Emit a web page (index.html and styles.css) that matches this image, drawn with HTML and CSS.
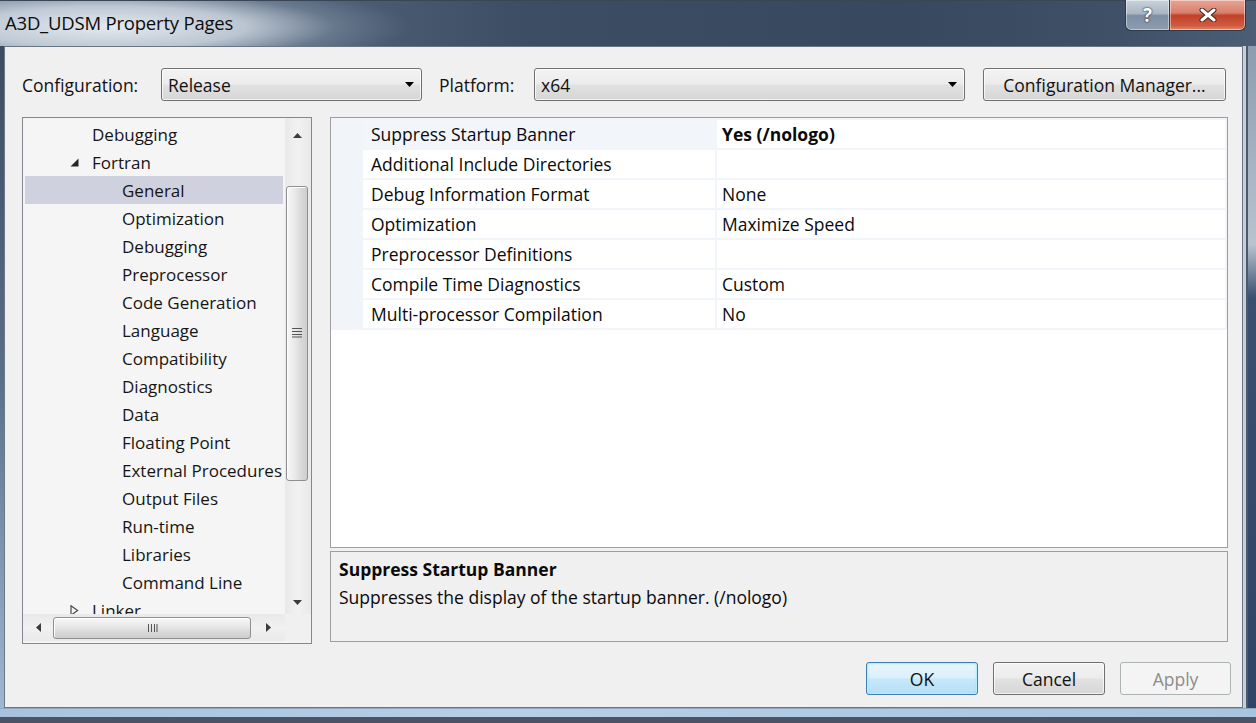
FILE: index.html
```html
<!DOCTYPE html>
<html>
<head>
<meta charset="utf-8">
<title>A3D_UDSM Property Pages</title>
<link rel="stylesheet" href="styles.css">
</head>
<body>
<div class="window">
  <div class="titlebar">
    <div class="title">A3D_UDSM Property Pages</div>
    <div class="caption-btns">
      <div class="cap help">?</div>
      <div class="cap close">
        <svg width="20" height="14" viewBox="0 0 20 14"><path d="M4 2 L16 12 M16 2 L4 12" stroke="#3a2a28" stroke-width="5" stroke-linecap="round"/><path d="M4 2 L16 12 M16 2 L4 12" stroke="#fff" stroke-width="3" stroke-linecap="round"/></svg>
      </div>
    </div>
  </div>
  <div class="middle">
    <div class="frame-l"></div>
    <div class="client">
      <div class="config-row">
        <div class="lbl lbl-conf">Configuration:</div>
        <div class="combo combo-conf">Release<svg class="arrow" width="9" height="5" viewBox="0 0 9 5"><path d="M0 0 H9 L4.5 5 Z" fill="#000"/></svg></div>
        <div class="lbl lbl-plat">Platform:</div>
        <div class="combo combo-plat">x64<svg class="arrow" width="9" height="5" viewBox="0 0 9 5"><path d="M0 0 H9 L4.5 5 Z" fill="#000"/></svg></div>
        <div class="btn btn-mgr">Configuration Manager...</div>
      </div>
      <div class="main">
        <div class="tree">
          <div class="tree-items">
            <div class="node l1 noexp">Debugging</div>
            <div class="node l1"><svg class="exp" width="9" height="9" viewBox="0 0 9 9"><path d="M8.5 0.5 V8.5 H0.5 Z" fill="#262626"/></svg>Fortran</div>
            <div class="node l2 sel">General</div>
            <div class="node l2">Optimization</div>
            <div class="node l2">Debugging</div>
            <div class="node l2">Preprocessor</div>
            <div class="node l2">Code Generation</div>
            <div class="node l2">Language</div>
            <div class="node l2">Compatibility</div>
            <div class="node l2">Diagnostics</div>
            <div class="node l2">Data</div>
            <div class="node l2">Floating Point</div>
            <div class="node l2">External Procedures</div>
            <div class="node l2">Output Files</div>
            <div class="node l2">Run-time</div>
            <div class="node l2">Libraries</div>
            <div class="node l2">Command Line</div>
            <div class="node l1"><svg class="exp" width="9" height="11" viewBox="0 0 9 11"><path d="M1 0.8 L7.6 5.5 L1 10.2 Z" fill="none" stroke="#4a4a4a" stroke-width="1.2"/></svg>Linker</div>
          </div>
          <div class="vscroll">
            <div class="varrow up"><svg width="9" height="5" viewBox="0 0 9 5"><path d="M0 5 H9 L4.5 0 Z" fill="#3c3c3c"/></svg></div>
            <div class="vthumb">
              <svg width="12" height="11" viewBox="0 0 12 11"><path d="M1 1.5 H11 M1 4.5 H11 M1 7.5 H11 M1 10 H11" stroke="#555" stroke-width="1"/></svg>
            </div>
            <div class="vspace"></div>
            <div class="varrow down"><svg width="9" height="5" viewBox="0 0 9 5"><path d="M0 0 H9 L4.5 5 Z" fill="#3c3c3c"/></svg></div>
          </div>
          <div class="hscroll">
            <div class="harrow"><svg width="5" height="9" viewBox="0 0 5 9"><path d="M5 0 V9 L0 4.5 Z" fill="#3c3c3c"/></svg></div>
            <div class="hthumb">
              <svg width="11" height="10" viewBox="0 0 11 10"><path d="M1.5 1 V9 M4.5 1 V9 M7.5 1 V9 M10 1 V9" stroke="#555" stroke-width="1"/></svg>
            </div>
            <div class="harrow"><svg width="5" height="9" viewBox="0 0 5 9"><path d="M0 0 V9 L5 4.5 Z" fill="#3c3c3c"/></svg></div>
          </div>
          <div class="corner"></div>
        </div>
        <div class="right">
          <div class="grid">
            <div class="rows">
              <div class="gut"></div><div class="name sel">Suppress Startup Banner</div><div class="val bold">Yes (/nologo)</div>
              <div class="gut"></div><div class="name">Additional Include Directories</div><div class="val"></div>
              <div class="gut"></div><div class="name">Debug Information Format</div><div class="val">None</div>
              <div class="gut"></div><div class="name">Optimization</div><div class="val">Maximize Speed</div>
              <div class="gut"></div><div class="name">Preprocessor Definitions</div><div class="val"></div>
              <div class="gut"></div><div class="name">Compile Time Diagnostics</div><div class="val">Custom</div>
              <div class="gut"></div><div class="name">Multi-processor Compilation</div><div class="val">No</div>
            </div>
          </div>
          <div class="desc">
            <div class="desc-title">Suppress Startup Banner</div>
            <div class="desc-text">Suppresses the display of the startup banner. (/nologo)</div>
          </div>
        </div>
      </div>
      <div class="buttons">
        <div class="btn btn-ok">OK</div>
        <div class="btn btn-cancel">Cancel</div>
        <div class="btn btn-apply">Apply</div>
      </div>
    </div>
    <div class="frame-r"></div>
  </div>
  <div class="frame-b"></div>
  <div class="strip"></div>
</div>
</body>
</html>
```

FILE: styles.css
```css
* { box-sizing: border-box; }
html, body { margin: 0; padding: 0; }
body {
  width: 1256px;
  height: 723px;
  overflow: hidden;
  background: #4c5566;
  font-family: "Open Sans", "Noto Sans", sans-serif;
  font-size: 17.5px;
  color: #111;
}
.window {
  width: 1256px;
  height: 723px;
  display: flex;
  flex-direction: column;
}

/* ---------- title bar ---------- */
.titlebar {
  height: 46px;
  flex: none;
  display: flex;
  align-items: flex-start;
  border-top: 1px solid #3a4556;
  background:
    radial-gradient(ellipse 300px 46px at 110px 26px, rgba(232,237,242,0.97) 0%, rgba(205,214,224,0.85) 45%, rgba(150,165,182,0.35) 75%, rgba(120,135,155,0) 100%),
    linear-gradient(to right, #76869a 0, #52637a 280px, #3c4d64 520px, #38485e 900px, #3f5067 1120px, #4c5e75 1256px);
}
.title {
  margin-top: 8px;
  padding-left: 5px;
  line-height: 28px;
  font-size: 18.5px;
  color: #0c0c0c;
  letter-spacing: -0.2px;
}
.caption-btns {
  margin-left: auto;
  margin-right: 10px;
  display: flex;
  margin-top: -1px;
}
.cap {
  height: 31px;
  display: flex;
  align-items: center;
  justify-content: center;
  border: 1px solid #2e3a4a;
  border-top: none;
  box-shadow: inset 0 0 0 1px rgba(255,255,255,0.45);
}
.help {
  width: 44px;
  border-radius: 0 0 0 6px;
  border-right: none;
  background: linear-gradient(#c9d2dc 0%, #aab6c4 45%, #7e8ea3 52%, #8c9db2 100%);
  color: #fff;
  font-weight: 700;
  font-size: 19px;
  text-shadow: 0 0 2px #223, 0 0 1px #223;
}
.close {
  width: 77px;
  border-radius: 0 0 6px 0;
  background: linear-gradient(#e6a597 0%, #d9806c 42%, #c2402a 52%, #cf5b3f 85%, #df8a6b 100%);
}

/* ---------- frames ---------- */
.middle {
  height: 662px;
  flex: none;
  display: flex;
}
.frame-l {
  width: 4px;
  flex: none;
  background: linear-gradient(#3c4c62 0%, #5a6f88 50%, #9fb8d2 100%);
}
.frame-r {
  width: 13px;
  flex: none;
  background:
    linear-gradient(to right, #c7d0da 0 3px, #4c5a6c 3px 5px, transparent 5px),
    linear-gradient(#8d9cb0 0%, #b8c3cf 30%, #3a5070 38%, #2e4566 100%);
}
.frame-b {
  height: 9px;
  flex: none;
  background: linear-gradient(to right, #a8c3de, #b7cfe6 40%, #a9c4df 100%);
  border-top: 1px solid #8ea7c0;
}
.strip {
  flex: 1;
  background: #4a5466;
}

/* ---------- client ---------- */
.client {
  width: 1239px;
  flex: none;
  background: #f0f0f0;
  border: 1px solid #6b7684;
  display: flex;
  flex-direction: column;
  padding: 21px 11px 0 17px;
}
.config-row {
  display: flex;
  align-items: center;
  height: 33px;
}
.lbl { white-space: nowrap; }
.lbl-conf { width: 139px; }
.lbl-plat { width: 95px; margin-left: 17px; }
.combo, .btn {
  height: 33px;
  border: 1px solid #707070;
  border-radius: 3px;
  background: linear-gradient(#f3f3f3 0%, #ececec 48%, #e1e1e1 52%, #d6d6d6 100%);
  box-shadow: inset 0 0 0 1px rgba(255,255,255,0.7);
  display: flex;
  align-items: center;
  white-space: nowrap;
}
.combo { padding-left: 6px; }
.combo .arrow { margin-left: auto; margin-right: 7px; }
.combo-conf { width: 261px; }
.combo-plat { width: 431px; }
.btn { justify-content: center; }
.btn-mgr { width: 243px; margin-left: 18px; }

.main {
  display: flex;
  margin-top: 16px;
  height: 527px;
}

/* ---------- tree ---------- */
.tree {
  width: 290px;
  flex: none;
  border: 1px solid #838790;
  background: #f4f4f4;
  display: grid;
  grid-template-columns: 262px 26px;
  grid-template-rows: 496px 27px 2px;
}
.tree-items {
  margin: 2px 2px 0 2px;
  overflow: hidden;
  background: #f5f5f5;
  font-size: 17px;
}
.node {
  height: 28px;
  display: flex;
  align-items: center;
  white-space: nowrap;
  color: #151515;
}
.node.l1 { padding-left: 45px; }
.node.l1.noexp { padding-left: 67px; }
.node.l2 { padding-left: 97px; }
.node.sel { background: #cfd2de; }
.exp { flex: none; margin-right: 13px; }

.vscroll {
  grid-column: 2;
  grid-row: 1;
  background: linear-gradient(to right, #e9e9e9, #f1f1f1 50%, #e9e9e9);
  display: flex;
  flex-direction: column;
}
.varrow {
  display: flex;
  align-items: center;
  justify-content: center;
  flex: none;
  padding-right: 1px;
}
.varrow.up { height: 34px; }
.varrow.down { height: 24px; }
.vthumb {
  margin-top: 34px;
  margin-left: 1px;
  width: 22px;
  height: 295px;
  flex: none;
  border: 1px solid #8f8f8f;
  border-radius: 3px;
  background: linear-gradient(to right, #f7f7f7 0%, #e9e9e9 40%, #d9d9d9 70%, #cdcdcd 100%);
  box-shadow: inset 1px 1px 0 #fff;
  display: flex;
  align-items: center;
  justify-content: center;
}
.vthumb svg { margin-top: -2px; }
.vspace { flex: 1; }

.hscroll {
  grid-column: 1;
  grid-row: 2;
  background: linear-gradient(#e9e9e9, #f1f1f1 50%, #e9e9e9);
  display: grid;
  grid-template-columns: 30px 198px 34px;
  align-items: center;
}
.harrow {
  display: flex;
  align-items: center;
  justify-content: center;
}
.harrow svg { display: block; }
.hthumb {
  height: 22px;
  border: 1px solid #8f8f8f;
  border-radius: 3px;
  background: linear-gradient(#f7f7f7 0%, #e9e9e9 40%, #d9d9d9 70%, #cdcdcd 100%);
  box-shadow: inset 1px 1px 0 #fff;
  display: flex;
  align-items: center;
  justify-content: center;
}
.corner {
  grid-column: 2;
  grid-row: 2;
  background: #f0f0f0;
}

/* ---------- right side ---------- */
.right {
  width: 898px;
  flex: none;
  margin-left: 18px;
  display: flex;
  flex-direction: column;
}
.grid {
  height: 431px;
  flex: none;
  border: 1px solid #9e9e9e;
  background: #fff;
}
.rows {
  display: grid;
  grid-template-columns: 28px 352px 1fr;
  grid-auto-rows: 28px;
  gap: 2px;
  padding: 2px;
  background: #f1f5fa;
}
.gut { background: #f1f5fa; }
.name, .val {
  background: #fff;
  display: flex;
  align-items: center;
  white-space: nowrap;
  color: #0a0a0a;
}
.name { padding-left: 8px; }
.name.sel { background: #f2f5fa; }
.val { padding-left: 5px; }
.val.bold { font-weight: 700; }

.desc {
  margin-top: 3px;
  height: 91px;
  flex: none;
  border: 1px solid #9e9e9e;
  background: #f0f0f0;
  padding: 3px 8px;
  line-height: 28px;
  color: #0a0a0a;
}
.desc-title { font-weight: 700; }

/* ---------- buttons ---------- */
.buttons {
  margin-top: 18px;
  display: flex;
  justify-content: flex-end;
  gap: 15px;
}
.btn-ok, .btn-cancel { width: 112px; }
.btn-apply { width: 111px; }
.btn-ok {
  border-color: #3c7fb1;
  background: linear-gradient(#eaf6fd 0%, #d9f0fc 48%, #c6e8fa 52%, #b5dff6 100%);
  box-shadow: inset 0 0 0 1px #b8ecff, inset 0 0 3px #8fd6f8;
}
.btn-apply {
  border-color: #adb2b5;
  background: #f4f4f4;
  box-shadow: none;
  color: #8c8c8c;
}
```
